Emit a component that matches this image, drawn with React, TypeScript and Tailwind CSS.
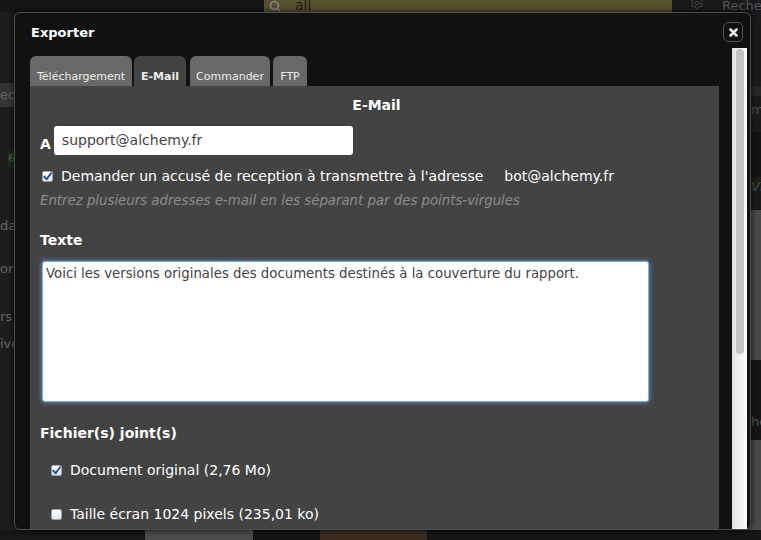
import { Search, Settings } from 'lucide-react'

function CheckBox({ checked }: { checked: boolean }) {
    return (
        <span className="flex h-[11px] w-[11px] shrink-0 items-center justify-center rounded-[2px] border border-[#9aa3b0] bg-gradient-to-b from-[#ffffff] to-[#dfe6f0]">
            {checked && (
                <svg width="9" height="9" viewBox="0 0 9 9">
                    <path d="M1.2 4.6 L3.6 7.2 L8 1.2" fill="none" stroke="#23479a" strokeWidth="1.9" strokeLinecap="round" strokeLinejoin="round" />
                </svg>
            )}
        </span>
    )
}

const tabs = [
    { label: 'Téléchargement', w: 'w-[102px]', ml: 'ml-0', active: false },
    { label: 'E-Mail', w: 'w-[52px]', ml: 'ml-[2px]', active: true },
    { label: 'Commander', w: 'w-[80px]', ml: 'ml-[4px]', active: false },
    { label: 'FTP', w: 'w-[34px]', ml: 'ml-[3px]', active: false },
]

export default function App() {
    return (
        <div className="relative h-[540px] w-[761px] overflow-hidden bg-[#191919] font-['DejaVu_Sans',sans-serif]">
            {/* page behind the dialog */}
            <div className="flex h-full flex-col">
                <div className="flex h-[12px] shrink-0">
                    <div className="w-[264px] bg-[#151515]"></div>
                    <div className="flex w-[408px] items-start gap-[14px] overflow-hidden bg-[#58512f] pl-[5px]">
                        <Search size={12} className="text-[#8a8a8a]" strokeWidth={3} />
                        <span className="-mt-[3px] text-[14px] leading-[16px] text-[#1b1b1b]">all</span>
                    </div>
                    <div className="flex w-[50px] justify-center bg-[#181818]">
                        <Settings size={14} className="-mt-[4px] text-[#3c3c3c]" />
                    </div>
                    <div className="flex-1 overflow-hidden bg-[#1a1a1a]">
                        <span className="-mt-[2px] block text-[13px] leading-[16px] text-[#555]">Reche</span>
                    </div>
                </div>
                <div className="flex flex-1">
                    <div className="flex w-[60px] flex-col bg-[#1d1d1d] text-[13px] text-[#666]">
                        <div className="mt-[71px] h-[24px] bg-[#353535] leading-[24px]">ec</div>
                        <div className="mt-[44px] ml-[8px] w-[20px] bg-[#1f2a1f] text-[11px] text-[#3f6b3f]">6</div>
                        <div className="mt-[48px]">da</div>
                        <div className="mt-[24px]">on</div>
                        <div className="mt-[28px]">rs</div>
                        <div className="mt-[8px]">ive</div>
                    </div>
                    <div className="flex-1"></div>
                    <div className="flex w-[30px] flex-col bg-[#1b1b1b] text-[13px] text-[#555]">
                        <div className="mt-[74px] h-[10px] bg-[#262626]"></div>
                        <div className="mt-[4px] pl-[20px]">m</div>
                        <div className="mt-[12px] h-[45px] bg-[#141414]"></div>
                        <div className="pl-[20px] italic">Vr</div>
                        <div className="mt-[14px] h-[150px] bg-[#4a4a4a]"></div>
                        <div className="h-[80px] bg-[#151515] pl-[20px] pt-[52px]">he</div>
                        <div className="flex-1 bg-[#4a4a4a]"></div>
                    </div>
                </div>
                <div className="flex h-[10px] shrink-0">
                    <div className="w-[145px] bg-[#171717]"></div>
                    <div className="w-[108px] bg-[#4b4b4b]"></div>
                    <div className="w-[67px] bg-[#141414]"></div>
                    <div className="w-[107px] bg-[#3a2b20]"></div>
                    <div className="flex-1 bg-[#161616]"></div>
                </div>
            </div>

            {/* dialog */}
            <div className="absolute left-[14px] top-[12px] flex h-[518px] w-[737px] flex-col rounded-[6px] border border-[#4d4d4d] bg-[#111111] shadow-[0_0_6px_rgba(0,0,0,0.8)]">
                <div className="flex h-[35px] shrink-0 items-start justify-between pl-[16px] pr-[7px]">
                    <h1 className="pt-[12px] text-[13px] font-bold leading-[16px] text-white">Exporter</h1>
                    <button className="mt-[9px] flex h-[20px] w-[20px] items-center justify-center rounded-[5px] border border-[#555] bg-[#111]">
                        <svg width="9" height="9" viewBox="0 0 9 9">
                            <path d="M1.5 1.5 L7.5 7.5 M7.5 1.5 L1.5 7.5" stroke="#f2f2f2" strokeWidth="2.5" strokeLinecap="round" />
                        </svg>
                    </button>
                </div>

                <div className="flex min-h-0 flex-1 pl-[15px]">
                    <div className="flex w-[689px] flex-col pt-[8px]">
                        <div className="flex h-[30px] shrink-0">
                            {tabs.map((t) => (
                                <div
                                    key={t.label}
                                    className={`${t.w} ${t.ml} ${t.active ? 'bg-[#434343] font-bold' : 'bg-[#686868]'} rounded-t-[6px] pt-[14px] text-center text-[11px] leading-[13px] text-[#eeeeee]`}
                                >
                                    {t.label}
                                </div>
                            ))}
                        </div>

                        <div className="flex-1 overflow-hidden bg-[#434343] text-white">
                            <div className="pl-[4px] pt-[11px] text-center text-[14px] font-bold leading-[17px]">E-Mail</div>

                            <div className="mt-[12px] flex items-center gap-[3px] pl-[10px]">
                                <span className="pt-[6px] text-[14px] font-bold leading-[16px]">A</span>
                                <div className="flex h-[29px] w-[299px] items-center rounded-[3px] bg-white px-[8px] text-[14px] text-[#444]">
                                    support@alchemy.fr
                                </div>
                            </div>

                            <div className="mt-[11px] flex h-[20px] items-center pl-[12px] text-[14px]">
                                <CheckBox checked={true} />
                                <span className="ml-[8px]">Demander un accusé de reception à transmettre à l'adresse</span>
                                <span className="ml-[21px]">bot@alchemy.fr</span>
                            </div>

                            <div className="mt-[6px] pl-[10px] text-[13.3px] italic leading-[18px] text-[#8d8d8d]">
                                Entrez plusieurs adresses e-mail en les séparant par des points-virgules
                            </div>

                            <div className="mt-[22px] pl-[10px] text-[14px] font-bold leading-[16px]">Texte</div>

                            <div className="ml-[12px] mt-[13px] h-[141px] w-[607px] rounded-[3px] border border-[#78aee6] bg-white px-[3px] pt-[4px] text-[13.3px] leading-[16px] text-[#444] shadow-[0_0_5px_rgba(110,170,235,0.9)]">
                                Voici les versions originales des documents destinés à la couverture du rapport.
                            </div>

                            <div className="mt-[23px] pl-[10px] text-[14px] font-bold leading-[16px]">Fichier(s) joint(s)</div>

                            <div className="mt-[19px] flex h-[20px] items-center pl-[21px] text-[14px]">
                                <CheckBox checked={true} />
                                <span className="ml-[8px]">Document original (2,76 Mo)</span>
                            </div>

                            <div className="mt-[24px] flex h-[20px] items-center pl-[21px] text-[14px]">
                                <CheckBox checked={false} />
                                <span className="ml-[8px]">Taille écran 1024 pixels (235,01 ko)</span>
                            </div>
                        </div>
                    </div>

                    <div className="ml-[13px] w-[15px] shrink-0 bg-gradient-to-r from-[#e2e2e2] to-[#fbfbfb] pl-[4px] pt-[1px]">
                        <div className="h-[305px] w-[8px] rounded-full bg-[#c3c3c3]"></div>
                    </div>
                </div>
            </div>
        </div>
    )
}
